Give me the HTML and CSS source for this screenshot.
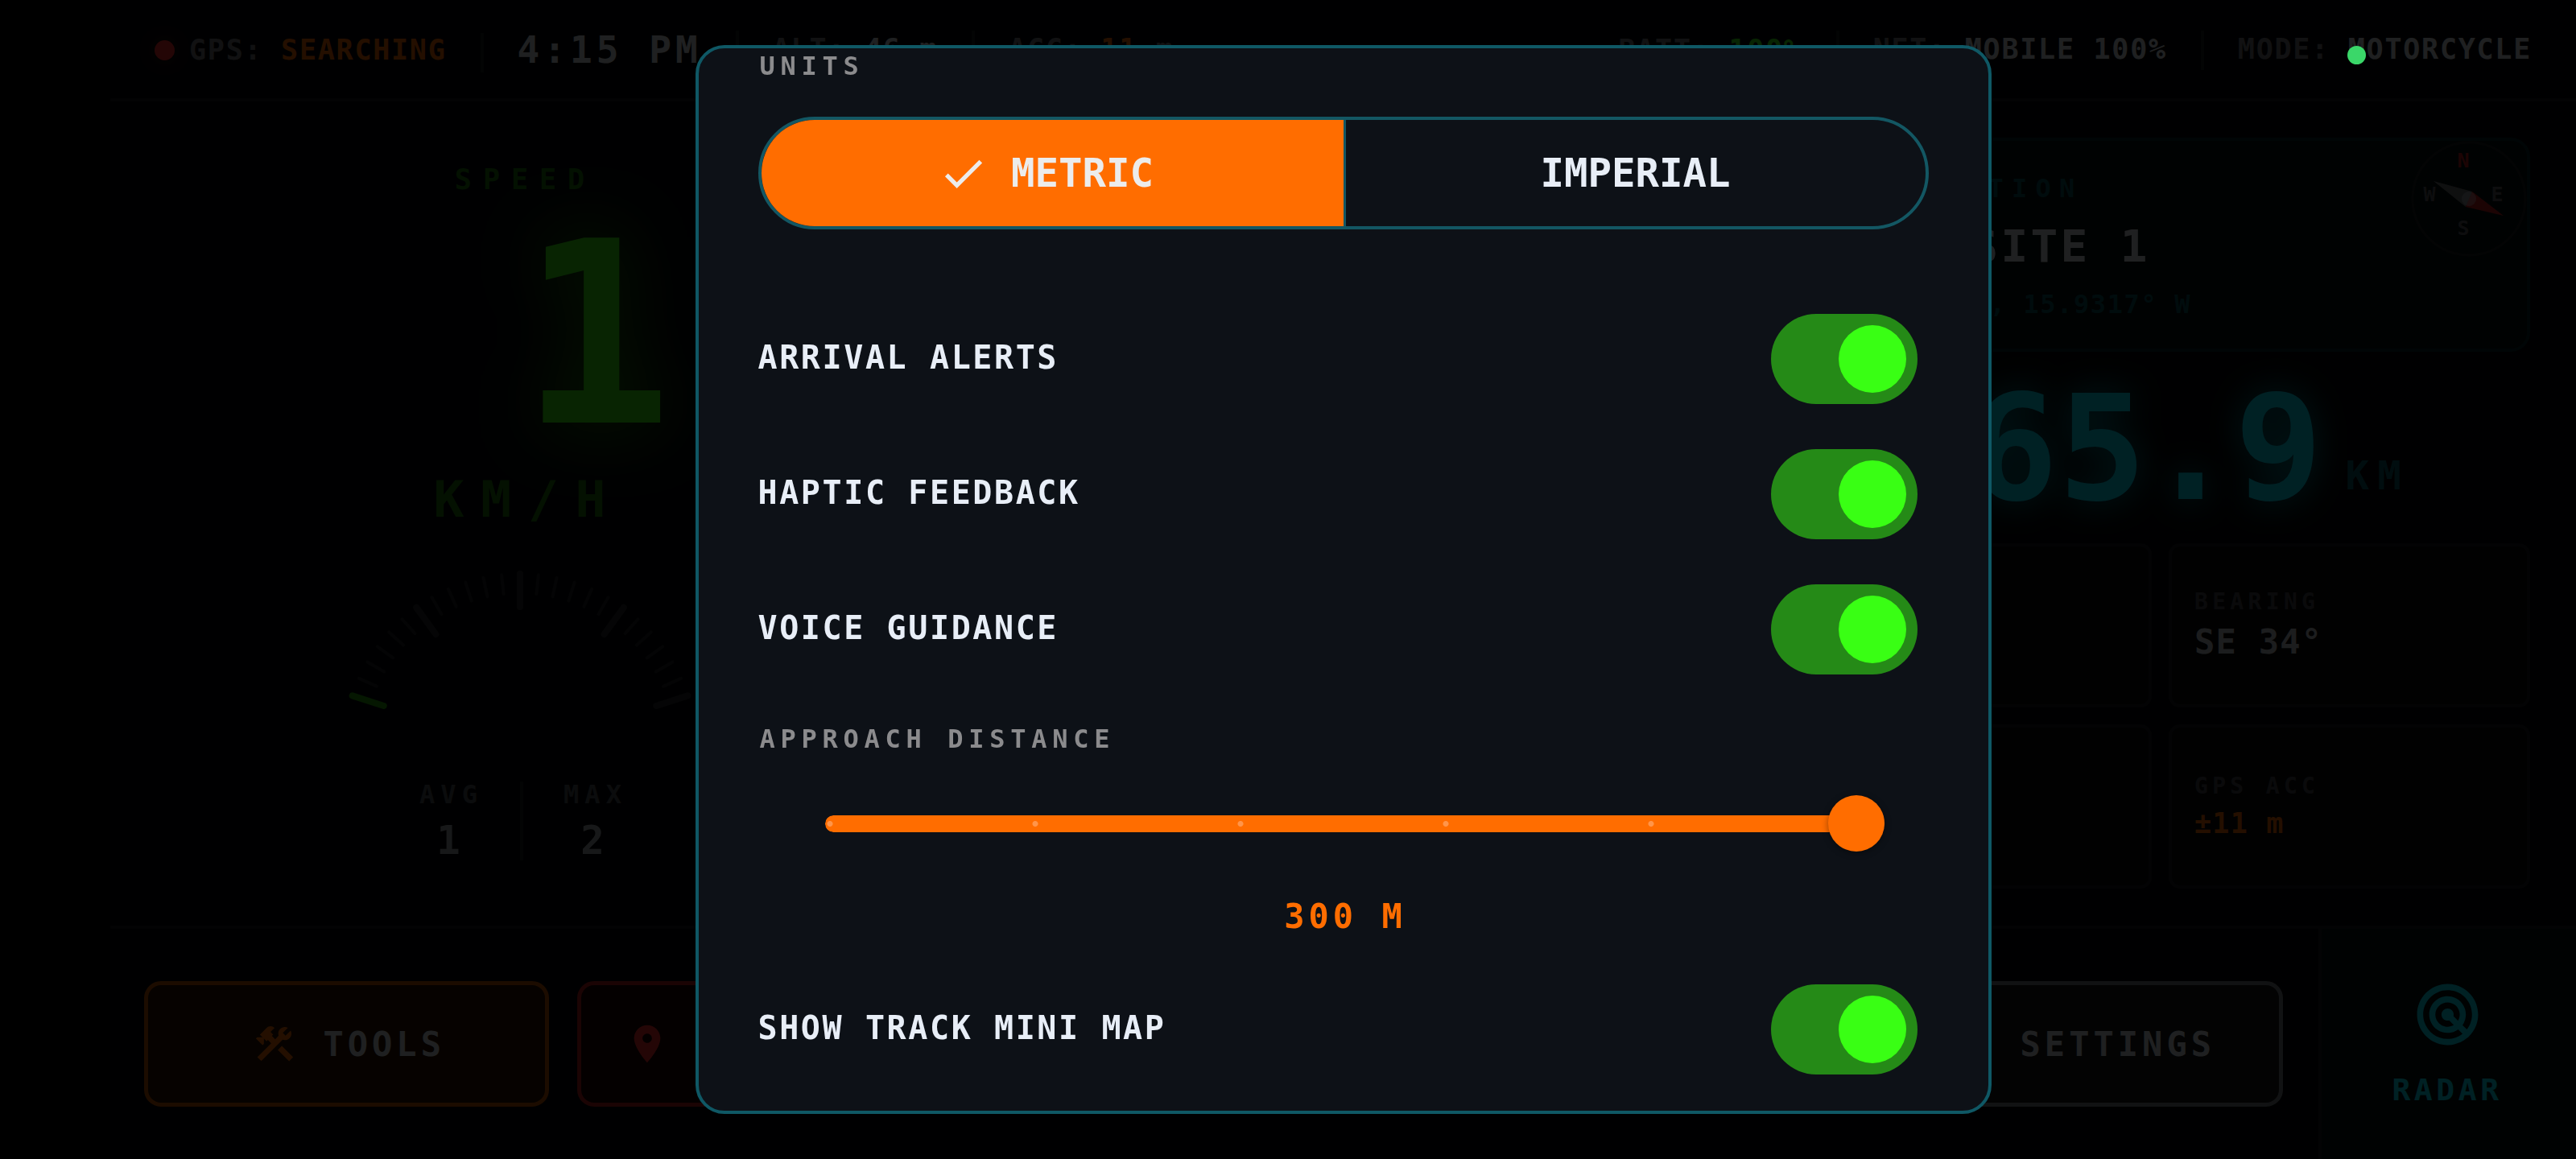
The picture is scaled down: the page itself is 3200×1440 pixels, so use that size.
FILE: index.html
```html
<!DOCTYPE html>
<html lang="en">
<head>
    <meta charset="UTF-8">
    <meta name="viewport" content="width=device-width, initial-scale=1.0">
    <title>Ride Dashboard</title>
    <link rel="stylesheet" href="styles.css">
</head>
<body>
    <div class="app">
        <header class="topbar">
            <div class="group">
                <p class="stat"><span class="dot"></span><span>GPS: <b class="orange">SEARCHING</b></span></p>
                <p class="stat clock">4:15 PM</p>
                <p class="stat">ALT: <b>46 m</b></p>
                <p class="stat">ACC: <b class="orange">11</b> m</p>
            </div>
            <div class="group">
                <p class="stat">BATT: <b class="green">100%</b></p>
                <p class="stat">NET: <b>MOBILE 100%</b></p>
                <p class="stat">MODE: <b>MOTORCYCLE</b></p>
            </div>
        </header>

        <main class="main">
            <section class="speed">
                <h2 class="speed-title">SPEED</h2>
                <div class="speed-value">1</div>
                <div class="speed-unit">KM/H</div>
                <svg class="gauge" viewBox="0 0 440 180">
                    <g id="ticks"></g>
                </svg>
                <div class="averages">
                    <div class="avg"><span class="small-label">AVG</span><b>1</b></div>
                    <div class="avg"><span class="small-label">MAX</span><b>2</b></div>
                </div>
            </section>

            <section class="map"></section>

            <section class="nav">
                <div class="destination">
                    <div class="place">
                        <h2 class="place-label">DESTINATION</h2>
                        <div class="place-name">CAMP SITE 1</div>
                        <div class="coords">21.4735° N, 15.9317° W</div>
                    </div>
                    <svg class="compass" viewBox="0 0 144 144">
                        <circle class="ring" cx="72" cy="72" r="70"/>
                        <text class="north" x="65" y="33">N</text>
                        <text x="65" y="117">S</text>
                        <text x="23" y="75">W</text>
                        <text x="107" y="75">E</text>
                        <path class="tail" d="M28 50 L76 63 L68 82 Z"/>
                        <path class="needle" d="M115 93 L76 63 L68 82 Z"/>
                        <circle class="hub" cx="72" cy="72" r="9"/>
                    </svg>
                </div>
                <div class="distance">
                    <span class="distance-value">165.9</span>
                    <span class="distance-unit">KM</span>
                </div>
                <div class="cards">
                    <div class="card"><span class="card-label">ETA</span><b>--</b></div>
                    <div class="card"><span class="card-label">BEARING</span><b>SE 34°</b></div>
                    <div class="card"><span class="card-label">TIME</span><b>--</b></div>
                    <div class="card"><span class="card-label">GPS ACC</span><b class="orange acc">±11 m</b></div>
                </div>
            </section>
        </main>

        <footer class="bottombar">
            <div class="actions">
                <button class="action tools" type="button">
                    <svg class="icon" viewBox="0 0 24 24"><path d="M13.78 15.17l2.12-2.12 6 6-2.12 2.12z"/><path d="M17.5 10c1.93 0 3.5-1.57 3.5-3.5 0-.58-.16-1.12-.41-1.6l-2.7 2.7-1.49-1.49 2.7-2.7c-.48-.25-1.02-.41-1.6-.41C15.57 3 14 4.57 14 6.5c0 .41.08.8.21 1.16l-1.85 1.85-1.78-1.78.71-.71-1.41-1.41L12 3.49c-1.17-1.17-3.07-1.17-4.24 0L4.22 7.03l1.41 1.41H2.81L2.1 9.15l3.54 3.54.71-.71V9.15l1.41 1.41.71-.71 1.78 1.78-7.41 7.41 2.12 2.12L16.34 9.79c.36.13.75.21 1.16.21z"/></svg>
                    TOOLS
                </button>
                <button class="action point" type="button">
                    <svg class="icon" viewBox="0 0 24 24"><path d="M12 2C8.13 2 5 5.13 5 9c0 5.25 7 13 7 13s7-7.75 7-13c0-3.87-3.13-7-7-7zm0 9.5c-1.38 0-2.5-1.12-2.5-2.5s1.12-2.5 2.5-2.5 2.5 1.12 2.5 2.5-1.12 2.5-2.5 2.5z"/></svg>
                    MARK POINT
                </button>
                <button class="action tracks" type="button">TRACKS</button>
                <button class="action routes" type="button">ROUTES</button>
                <button class="action settings" type="button">
                    <svg class="icon" viewBox="0 0 24 24"><circle cx="12" cy="12" r="7"/></svg>
                    SETTINGS
                </button>
            </div>
            <button class="radar" type="button">
                <svg class="radar-icon" viewBox="0 0 24 24"><path d="M19.74 18.33C21.15 16.6 22 14.4 22 12c0-5.52-4.48-10-10-10S2 6.48 2 12s4.48 10 10 10c2.4 0 4.6-.85 6.33-2.26.27-.22.53-.46.78-.71.03-.03.05-.06.07-.08.2-.2.39-.41.56-.62zM12 20c-4.41 0-8-3.59-8-8s3.59-8 8-8 8 3.59 8 8c0 1.85-.63 3.54-1.69 4.9l-1.43-1.43c.69-.98 1.1-2.17 1.1-3.46 0-3.31-2.69-6-6-6s-6 2.69-6 6 2.69 6 6 6c1.3 0 2.51-.42 3.49-1.13l1.42 1.42C15.54 19.37 13.85 20 12 20zm1.92-7.49c.17-.66.02-1.38-.49-1.9l-.02-.02c-.77-.77-2-.78-2.78-.04-.01.01-.03.02-.05.04-.78.78-.78 2.05 0 2.83l.02.02c.52.51 1.25.67 1.91.49l1.51 1.51c-.6.36-1.29.58-2.04.58-2.21 0-4-1.79-4-4s1.79-4 4-4 4 1.79 4 4c0 .73-.21 1.41-.56 2l-1.5-1.51z"/></svg>
                RADAR
            </button>
        </footer>
    </div>

    <div class="backdrop">
        <form class="dialog" role="dialog" aria-label="Settings">
            <h3 class="section-label">UNITS</h3>
            <div class="segments">
                <label class="segment">
                    <input type="radio" name="units" value="metric" checked>
                    <svg class="check" viewBox="0 0 24 24"><path d="M9 16.17L4.83 12l-1.42 1.41L9 19 21 7l-1.41-1.41z"/></svg>
                    METRIC
                </label>
                <label class="segment">
                    <input type="radio" name="units" value="imperial">
                    IMPERIAL
                </label>
            </div>
            <div class="switches">
                <div class="row">
                    <label for="arrival">ARRIVAL ALERTS</label>
                    <input class="switch" type="checkbox" role="switch" id="arrival" checked>
                </div>
                <div class="row">
                    <label for="haptic">HAPTIC FEEDBACK</label>
                    <input class="switch" type="checkbox" role="switch" id="haptic" checked>
                </div>
                <div class="row">
                    <label for="voice">VOICE GUIDANCE</label>
                    <input class="switch" type="checkbox" role="switch" id="voice" checked>
                </div>
            </div>
            <label class="section-label" for="approach">APPROACH DISTANCE</label>
            <input class="slider" type="range" id="approach" min="50" max="300" step="50" value="300">
            <output class="slider-value" for="approach">300 M</output>
            <div class="row">
                <label for="minimap">SHOW TRACK MINI MAP</label>
                <input class="switch" type="checkbox" role="switch" id="minimap" checked>
            </div>
        </form>
    </div>
    <span class="camera-dot"></span>

    <script src="script.js"></script>
</body>
</html>
```
FILE: styles.css
```css
* {
    box-sizing: border-box;
}
body {
    margin: 0;
    background-color: #000;
    color: #dde2e8;
    font-family: "DejaVu Sans Mono", monospace;
    font-weight: bold;
}
h2, h3, p {
    margin: 0;
    font-weight: bold;
}
button, input {
    font: inherit;
    margin: 0;
}
.orange {
    color: #ff6d00;
}
.green {
    color: #39ff14;
}

/* dashboard */
.app {
    min-height: 100vh;
    margin-left: 137px;
    display: grid;
    grid-template-rows: 126px 1fr 290px;
    background-color: #050608;
}
.topbar {
    display: flex;
    justify-content: space-between;
    padding: 2px 55px 0;
    border-bottom: 4px solid #191b1e;
}
.group {
    display: flex;
    align-items: center;
}
.stat {
    display: flex;
    align-items: center;
    gap: 18px;
    color: #777b80;
    font-size: 35px;
    letter-spacing: .05em;
    white-space: pre;
}
.stat:not(:has(.dot)) {
    display: block;
}
.stat b:not([class]) {
    color: #dde2e8;
}
.stat + .stat::before {
    content: "";
    display: inline-block;
    width: 4px;
    height: 49px;
    margin: 0 42px;
    background-color: #1b1e22;
    vertical-align: middle;
}
.stat.clock {
    color: #dde2e8;
    font-size: 46px;
    letter-spacing: .11em;
}
.dot {
    width: 25px;
    height: 25px;
    border-radius: 50%;
    background-color: #ff2a2a;
    box-shadow: 0 0 28px #ff2a2a40;
}

.main {
    display: grid;
    grid-template-columns: repeat(3, minmax(0, 1fr));
}
.speed {
    display: flex;
    flex-direction: column;
    align-items: center;
    padding: 76px 4px 0 0;
}
.speed-title {
    padding-left: .4em;
    color: #1c7a0c;
    font-size: 35px;
    line-height: 42px;
    letter-spacing: .4em;
}
.speed-value {
    min-width: 2ch;
    color: #39ff14;
    font-size: 315px;
    line-height: 344px;
    text-align: right;
    text-shadow: 0 0 90px #39ff1499;
}
.speed-unit {
    padding-left: .33em;
    color: #1c7a0c;
    font-size: 63px;
    line-height: 66px;
    letter-spacing: .33em;
}
.gauge {
    width: 440px;
    margin-top: 54px;
}
.gauge line {
    stroke: #1c1f23;
    stroke-width: 4;
    stroke-linecap: round;
}
.gauge .major {
    stroke: #26292d;
    stroke-width: 8;
}
.gauge .active {
    stroke: #24a40d;
}
.averages {
    display: flex;
    align-items: center;
    margin-top: 83px;
}
.avg {
    width: 177px;
    display: flex;
    flex-direction: column;
    align-items: center;
    gap: 17px;
    font-size: 49px;
    line-height: 49px;
    color: #a4a8ad;
}
.avg + .avg {
    border-left: 4px solid #1b1e22;
}
.small-label {
    padding-left: .22em;
    color: #50545a;
    font-size: 32px;
    line-height: 32px;
    letter-spacing: .22em;
}

.nav {
    display: grid;
    grid-template-rows: 266px 1fr auto;
    padding: 45px 57px 46px 45px;
}
.destination {
    display: flex;
    justify-content: space-between;
    align-items: flex-start;
    padding-left: 35px;
    border: 4px solid #06252b;
    border-radius: 24px;
    background-color: #06100f;
}
.place {
    padding-top: 39px;
}
.place-label {
    color: #00545f;
    font-size: 32px;
    line-height: 40px;
    letter-spacing: .32em;
}
.place-name {
    margin-top: 18px;
    font-size: 56px;
    line-height: 68px;
    letter-spacing: .06em;
}
.coords {
    margin-top: 18px;
    color: #005560;
    font-size: 32px;
    line-height: 40px;
    letter-spacing: .05em;
    white-space: nowrap;
}
.compass {
    width: 144px;
    height: 144px;
    flex: none;
}
.compass text {
    fill: #5a5e64;
    font-size: 25px;
    text-anchor: middle;
}
.compass .north {
    fill: #c41f1f;
}
.compass .ring {
    fill: none;
    stroke: #1b1e22;
    stroke-width: 3;
}
.compass .needle {
    fill: #c41f1f;
}
.compass .tail {
    fill: #6b7075;
}
.compass .hub {
    fill: #dde2e866;
}
.distance {
    display: flex;
    justify-content: flex-end;
    align-items: flex-end;
    gap: 28px;
    padding: 0 150px 20px 0;
    color: #00e5ff;
}
.distance-value {
    font-size: 182px;
    line-height: 196px;
    text-shadow: 0 0 42px #00e5ffaa;
}
.distance-unit {
    padding-bottom: 34px;
    color: #00606c;
    font-size: 49px;
    line-height: 58px;
    letter-spacing: .21em;
}
.cards {
    display: grid;
    grid-template-columns: 1fr 1fr;
    grid-auto-rows: 204px;
    gap: 21px;
}
.card {
    display: flex;
    flex-direction: column;
    justify-content: center;
    gap: 8px;
    padding: 0 28px;
    border: 4px solid #171a1d;
    border-radius: 14px;
    background-color: #080a0c;
    font-size: 42px;
    line-height: 50px;
    letter-spacing: .03em;
    color: #c8ccd2;
}
.card-label {
    color: #484c52;
    font-size: 28px;
    line-height: 34px;
    letter-spacing: .19em;
}
.acc {
    font-size: 35px;
    line-height: 42px;
}

.bottombar {
    display: flex;
    border-top: 4px solid #191b1e;
}
.actions {
    flex: 1;
    display: grid;
    grid-template-columns: repeat(5, 1fr);
    gap: 35px;
    padding: 65px 44px 65px 42px;
}
.action {
    display: flex;
    justify-content: center;
    align-items: center;
    gap: 32px;
    padding: 0 0 0 5px;
    border: 5px solid;
    border-radius: 21px;
    color: #dde2e8;
    font-size: 42px;
    letter-spacing: .12em;
    white-space: nowrap;
}
.icon {
    width: 56px;
    height: 56px;
}
.tools {
    border-color: #c85500;
    background-color: #2a1300;
    fill: #ff6d00;
}
.point {
    border-color: #c01c1c;
    background-color: #1e0505;
    fill: #ff2a2a;
}
.tracks, .routes {
    border-color: #1c7a0c;
    background-color: #071a06;
}
.settings {
    border-color: #7c8085;
    background-color: #15191b;
    fill: #dde2e8;
}
.radar {
    width: 320px;
    display: flex;
    flex-direction: column;
    justify-content: center;
    align-items: center;
    gap: 26px;
    padding: 0 4px 4px 0;
    border: 0;
    border-left: 4px solid #171a1d;
    background-color: #061214;
    color: #00e5ff;
    fill: #00e5ff;
    font-size: 38px;
    letter-spacing: .12em;
}
.radar-icon {
    width: 91px;
    height: 91px;
}

/* settings dialog */
.backdrop {
    position: fixed;
    inset: 0;
    display: flex;
    justify-content: center;
    padding: 56px 0 56px 137px;
    background-color: rgba(0, 0, 0, .86);
}
.dialog {
    width: 1610px;
    max-width: 94%;
    display: flex;
    flex-direction: column;
    padding: 6px 74px 0;
    border: 4px solid #0f5865;
    border-radius: 36px;
    background-color: #0d1117;
    color: #e8eef7;
    overflow: hidden;
}
.section-label {
    padding-left: 2px;
    color: #8b8b8d;
    font-size: 32px;
    line-height: 32px;
    letter-spacing: .21em;
}
.segments {
    flex: none;
    height: 140px;
    display: grid;
    grid-template-columns: 1fr 1fr;
    margin-top: 47px;
    border: 4px solid #135763;
    border-radius: 70px;
    overflow: hidden;
}
.segment {
    display: flex;
    justify-content: center;
    align-items: center;
    gap: 28px;
    font-size: 49px;
}
.segment input {
    appearance: none;
    width: 0;
    height: 0;
    margin-right: -28px;
}
.segment:has(:checked) {
    padding-right: 16px;
    background-color: #ff6d00;
    color: #ececec;
}
.segment + .segment {
    border-left: 3px solid #135763;
}
.check {
    width: 63px;
    height: 63px;
    fill: #ececec;
}
.switches {
    margin: 77px 0 36px;
}
.row {
    flex: none;
    height: 168px;
    display: flex;
    justify-content: space-between;
    align-items: center;
    padding-right: 14px;
    font-size: 40px;
    letter-spacing: .065em;
}
.row label {
    padding-bottom: 5px;
}
.switch {
    appearance: none;
    width: 182px;
    height: 112px;
    display: flex;
    align-items: center;
    padding: 14px;
    border-radius: 56px;
    background-color: #2c3138;
}
.switch::before {
    content: "";
    width: 84px;
    height: 84px;
    border-radius: 50%;
    background-color: #8b8b8d;
}
.switch:checked {
    justify-content: flex-end;
    background-color: #258a17;
}
.switch:checked::before {
    background-color: #39ff14;
}
.slider {
    appearance: none;
    height: 70px;
    margin: 54px 55px 0 83px;
    background: none;
}
.slider::-webkit-slider-runnable-track {
    height: 21px;
    border-radius: 10px;
    background-color: #ff6d00;
    background-image: radial-gradient(circle at 6px center, #ff954a 3px, transparent 4px);
    background-size: calc((100% - 41px) / 5) 100%;
    background-clip: content-box;
    padding-right: 0;
}
.slider::-webkit-slider-thumb {
    appearance: none;
    width: 70px;
    height: 70px;
    margin-top: -25px;
    border-radius: 50%;
    background-color: #ff6d00;
    box-shadow: 0 2px 8px #0006;
}
.slider-value {
    margin: 60px 0 35px;
    padding-left: .12em;
    color: #ff6d00;
    font-size: 42px;
    line-height: 42px;
    letter-spacing: .12em;
    text-align: center;
}
.camera-dot {
    position: absolute;
    top: 57px;
    right: 261px;
    width: 23px;
    height: 23px;
    border-radius: 50%;
    background-color: #3ad769;
}
```
FILE: script.js
```js
// arc of 25 ticks, 6 degrees apart, every sixth one is long
const ticks = document.getElementById("ticks");
for (let i = 0; i <= 24; i++) {
    const major = i % 6 == 0;
    const line = document.createElementNS("http://www.w3.org/2000/svg", "line");
    line.setAttribute("x1", 220);
    line.setAttribute("x2", 220);
    line.setAttribute("y1", 5);
    line.setAttribute("y2", major ? 46 : 29);
    line.setAttribute("transform", "rotate(" + (i * 6 - 72) + " 220 224)");
    if (major)
        line.classList.add("major");
    if (i == 0)
        line.classList.add("active");
    ticks.appendChild(line);
}

const slider = document.getElementById("approach");
slider.addEventListener("input", function () {
    document.querySelector(".slider-value").textContent = slider.value + " M";
});
```
